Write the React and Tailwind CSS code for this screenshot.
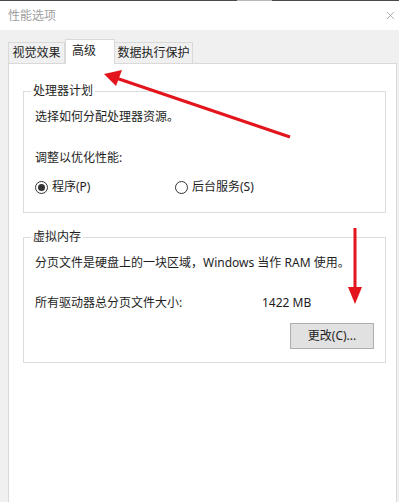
import { X } from 'lucide-react';

function Radio({ checked, label, className = '' }) {
  return (
    <label className={`flex items-center gap-[4px] ${className}`}>
      <span className="w-[13px] h-[13px] rounded-full border border-[#333] flex items-center justify-center bg-white">
        {checked && <span className="w-[7px] h-[7px] rounded-full bg-[#333]" />}
      </span>
      <span>{label}</span>
    </label>
  );
}

function GroupBox({ title, children, className = '' }) {
  return (
    <fieldset className={`border border-[#dcdcdc] ${className}`}>
      <legend className="ml-[7px] px-[2px] leading-[16px]">{title}</legend>
      {children}
    </fieldset>
  );
}

export default function App() {
  return (
    <div className="relative w-[399px] h-[502px] overflow-hidden bg-white text-[12px] leading-[16px] text-[#1e1e1e] font-['Noto_Sans','Noto_Sans_CJK_SC',sans-serif]">
      {/* window edge */}
      <div className="h-[1px] bg-[#4a4a4a] flex">
        <div className="ml-[237px] w-[35px] bg-[#b8b8b8]" />
      </div>

      {/* title bar */}
      <div className="h-[29px] flex items-center justify-between pl-[8px] pr-[2px]">
        <span className="text-[#a0a0a0]">性能选项</span>
        <X size={13} strokeWidth={1.2} className="text-[#8a8a8a]" />
      </div>

      <div className="bg-[#f0f0f0] h-[472px] flex flex-col pl-[8px]">
        {/* tabs */}
        <div className="flex items-end h-[33px] pt-[8px]">
          <div className="h-[21px] w-[57px] flex items-center justify-center border border-b-0 border-[#d9d9d9] bg-[#f0f0f0]">视觉效果</div>
          <div className="h-[25px] w-[50px] pl-[6px] -mb-[1px] relative z-10 flex items-start pt-[3px] border border-b-0 border-[#d9d9d9] bg-white">高级</div>
          <div className="h-[21px] w-[78px] flex items-center justify-center border border-b-0 border-l-0 border-[#d9d9d9] bg-[#f0f0f0]">数据执行保护</div>
        </div>

        {/* panel */}
        <div className="flex-1 bg-white border-t border-l border-r border-[#d9d9d9] mr-[2px] pl-[14px] pt-[19px]">
          <GroupBox title="处理器计划" className="w-[363px] pb-[17px]">
            <div className="pl-[11px] pt-[10px]">
              <div>选择如何分配处理器资源。</div>
              <div className="mt-[25px]">调整以优化性能:</div>
              <div className="mt-[13px] flex">
                <Radio checked label="程序(P)" className="w-[140px]" />
                <Radio label="后台服务(S)" />
              </div>
            </div>
          </GroupBox>

          <GroupBox title="虚拟内存" className="w-[363px] mt-[16px] pb-[13px]">
            <div className="pl-[11px] pt-[10px]">
              <div>分页文件是硬盘上的一块区域，Windows 当作 RAM 使用。</div>
              <div className="mt-[24px] flex">
                <span className="w-[227px]">所有驱动器总分页文件大小:</span>
                <span>1422 MB</span>
              </div>
              <div className="mt-[12px] flex justify-end pr-[11px]">
                <button className="w-[84px] h-[26px] bg-[#e1e1e1] border border-[#adadad] flex items-center justify-center">
                  更改(C)...
                </button>
              </div>
            </div>
          </GroupBox>
        </div>
      </div>

      {/* annotation arrows */}
      <svg className="absolute inset-0 pointer-events-none" width="399" height="502">
        <line x1="290" y1="137" x2="116" y2="78" stroke="#e3141c" strokeWidth="3" />
        <polygon points="104,74 122,70 116,86" fill="#e3141c" />
        <line x1="355" y1="228" x2="355" y2="290" stroke="#e3141c" strokeWidth="3" />
        <polygon points="355,304 348,287 362,287" fill="#e3141c" />
      </svg>
    </div>
  );
}
